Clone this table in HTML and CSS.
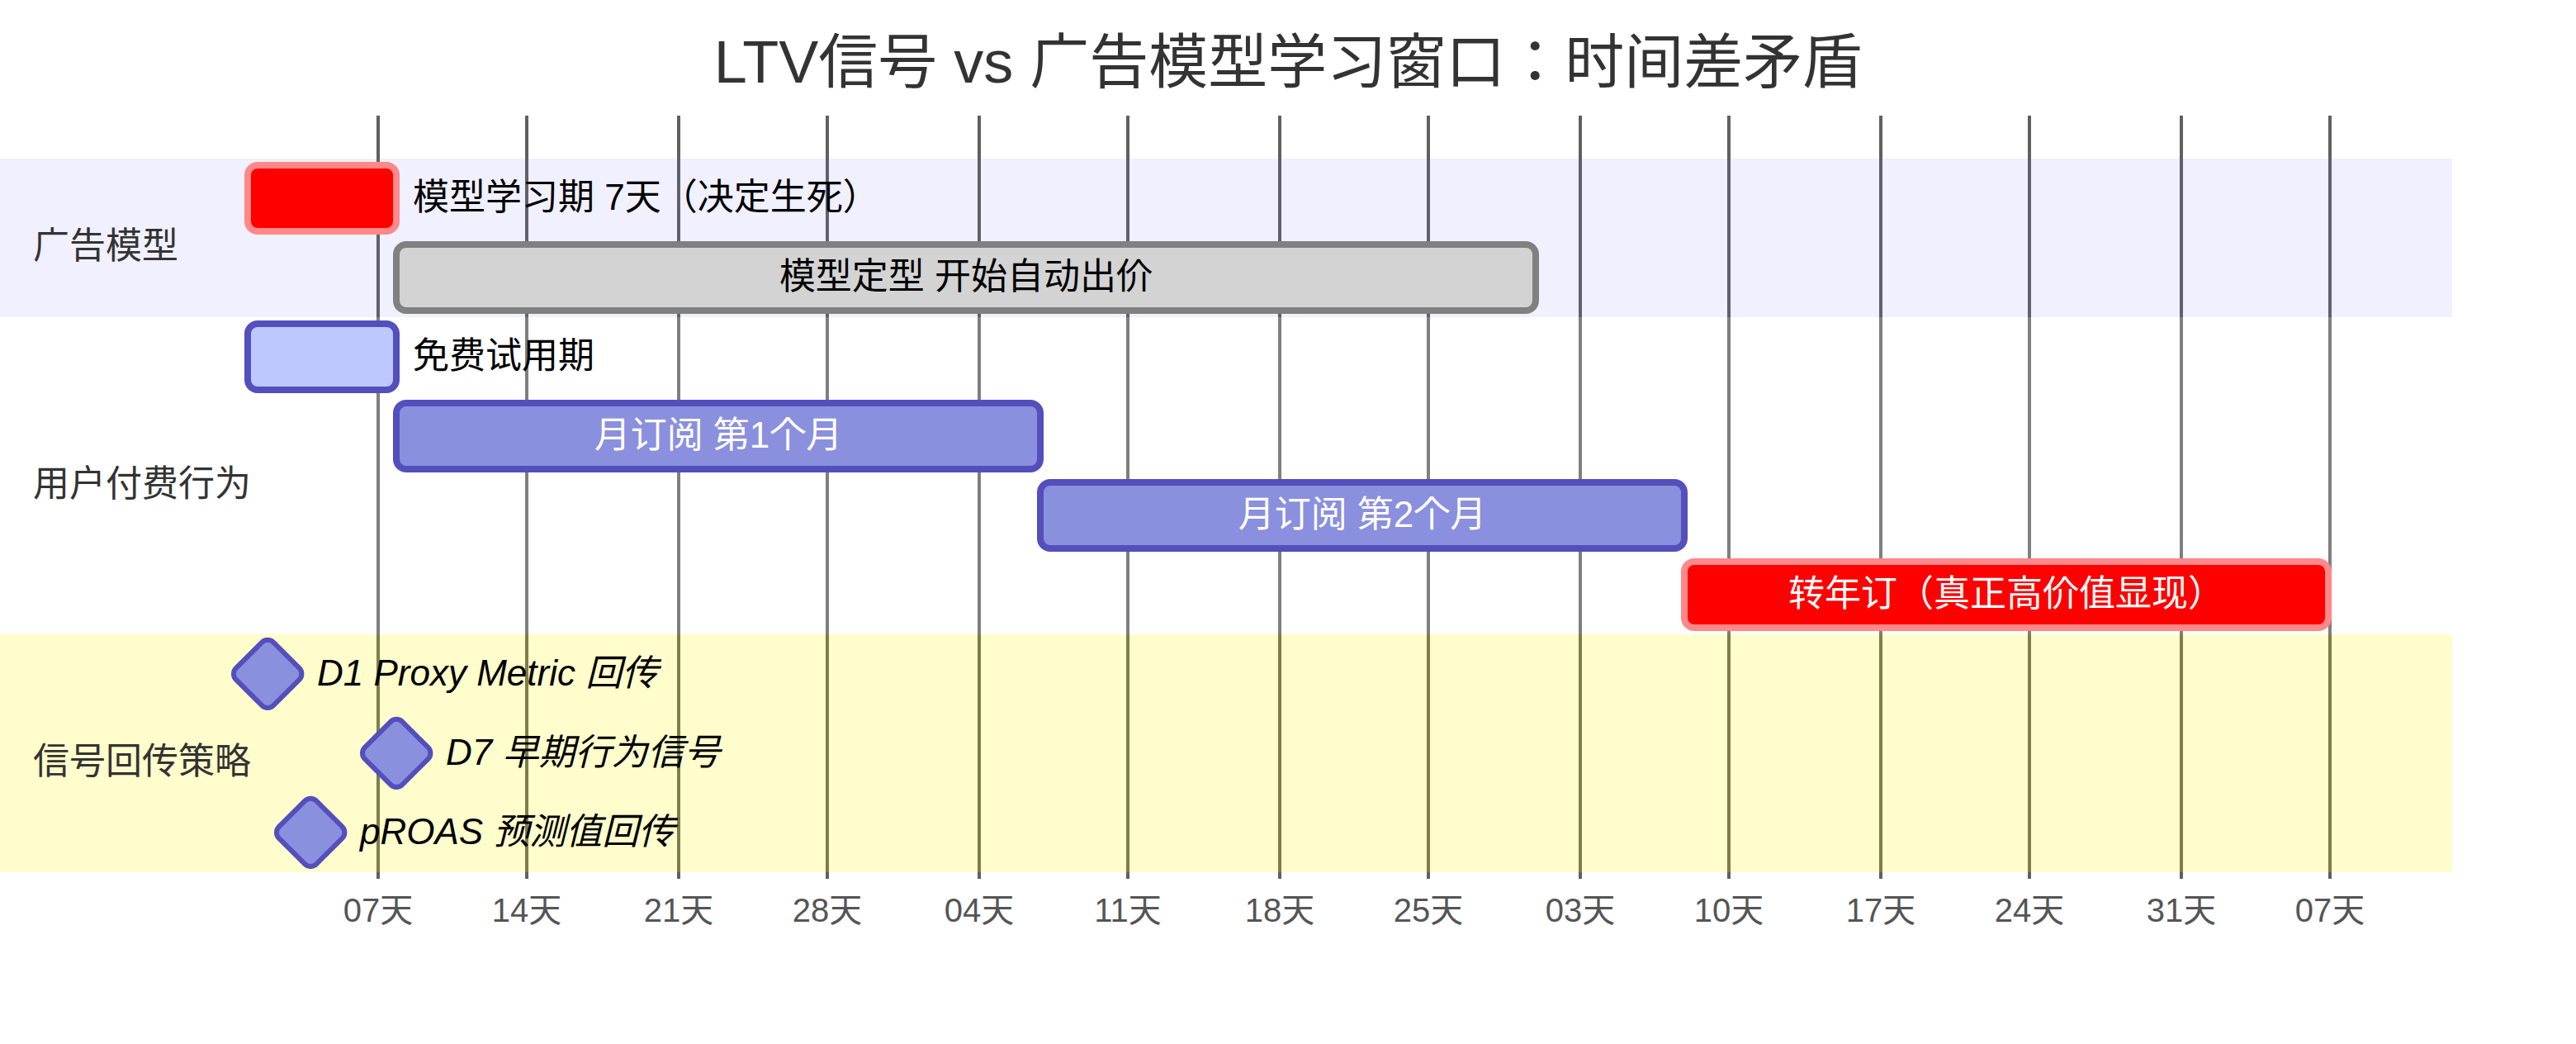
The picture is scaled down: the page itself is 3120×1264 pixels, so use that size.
FILE: index.html
```html
<!DOCTYPE html>
<html>
<head>
<meta charset="utf-8">
<title>LTV信号 vs 广告模型学习窗口：时间差矛盾</title>
<link rel="stylesheet" href="styles.css">
</head>
<body>
<div class="chart">
  <div class="grid">
    <div class="tick" style="left:458px"><span class="tick-label">07天</span></div>
    <div class="tick" style="left:638px"><span class="tick-label">14天</span></div>
    <div class="tick" style="left:822px"><span class="tick-label">21天</span></div>
    <div class="tick" style="left:1002px"><span class="tick-label">28天</span></div>
    <div class="tick" style="left:1186px"><span class="tick-label">04天</span></div>
    <div class="tick" style="left:1366px"><span class="tick-label">11天</span></div>
    <div class="tick" style="left:1550px"><span class="tick-label">18天</span></div>
    <div class="tick" style="left:1730px"><span class="tick-label">25天</span></div>
    <div class="tick" style="left:1914px"><span class="tick-label">03天</span></div>
    <div class="tick" style="left:2094px"><span class="tick-label">10天</span></div>
    <div class="tick" style="left:2278px"><span class="tick-label">17天</span></div>
    <div class="tick" style="left:2458px"><span class="tick-label">24天</span></div>
    <div class="tick" style="left:2642px"><span class="tick-label">31天</span></div>
    <div class="tick" style="left:2822px"><span class="tick-label">07天</span></div>
  </div>

  <h1 class="title">LTV信号 vs 广告模型学习窗口：时间差矛盾</h1>

  <div class="sections">
    <section class="section section-0">
      <div class="section-label">广告模型</div>
      <div class="rows">
        <div class="row">
          <div class="bar crit" style="margin-left:296px;width:188px"></div>
          <span class="outside-text">模型学习期 7天（决定生死）</span>
        </div>
        <div class="row">
          <div class="bar done" style="margin-left:476px;width:1388px"><span class="inside-text">模型定型 开始自动出价</span></div>
        </div>
      </div>
    </section>

    <section class="section section-1">
      <div class="section-label">用户付费行为</div>
      <div class="rows">
        <div class="row">
          <div class="bar active" style="margin-left:296px;width:188px"></div>
          <span class="outside-text">免费试用期</span>
        </div>
        <div class="row">
          <div class="bar task" style="margin-left:476px;width:788px"><span class="inside-text">月订阅 第1个月</span></div>
        </div>
        <div class="row">
          <div class="bar task" style="margin-left:1256px;width:788px"><span class="inside-text">月订阅 第2个月</span></div>
        </div>
        <div class="row">
          <div class="bar crit" style="margin-left:2036px;width:788px"><span class="inside-text">转年订（真正高价值显现）</span></div>
        </div>
      </div>
    </section>

    <section class="section section-2">
      <div class="section-label">信号回传策略</div>
      <div class="rows">
        <div class="row">
          <div class="diamond" style="margin-left:288.8px"></div>
          <span class="milestone-text">D1 Proxy Metric 回传</span>
        </div>
        <div class="row">
          <div class="diamond" style="margin-left:444.8px"></div>
          <span class="milestone-text">D7 早期行为信号</span>
        </div>
        <div class="row">
          <div class="diamond" style="margin-left:340.8px"></div>
          <span class="milestone-text">pROAS 预测值回传</span>
        </div>
      </div>
    </section>
  </div>
</div>
</body>
</html>
```

FILE: styles.css
```css
html, body {
  margin: 0;
  padding: 0;
  background: #ffffff;
}

body {
  width: 3120px;
  height: 1264px;
  overflow: hidden;
  font-family: "Liberation Sans", "Noto Sans CJK JP", "Noto Sans CJK SC", sans-serif;
}

.chart {
  position: relative;
  width: 3120px;
  height: 1264px;
}

/* ---------- grid / axis ---------- */
.grid {
  position: absolute;
  inset: 0;
  z-index: 0;
}

.tick {
  position: absolute;
  top: 140px;
  width: 4px;
  height: 924px;
  margin-left: -2px;
  background: #606060;
}

.tick-label {
  position: absolute;
  top: 942px;
  left: 50%;
  transform: translateX(-50%);
  white-space: nowrap;
  font-size: 40px;
  line-height: 40px;
  color: #555555;
}

/* ---------- title ---------- */
.title {
  margin: 0;
  padding-top: 35px;
  height: 80px;
  font-size: 72px;
  line-height: 80px;
  font-weight: normal;
  color: #333333;
  text-align: center;
  white-space: nowrap;
}

/* ---------- sections ---------- */
.sections {
  position: relative;
  z-index: 1;
  margin-top: 77px;
  display: flex;
  flex-direction: column;
  width: 2970px;
}

.section {
  display: grid;
}

.section-0 { background: rgba(102, 102, 255, 0.098); }
.section-1 { background: rgba(255, 255, 255, 0.2); }
.section-2 { background: rgba(255, 244, 0, 0.2); }

.section-label {
  grid-area: 1 / 1;
  align-self: center;
  justify-self: start;
  padding-left: 40px;
  padding-top: 20px;
  font-size: 44px;
  line-height: 44px;
  color: #333333;
  white-space: nowrap;
}

.rows {
  grid-area: 1 / 1;
  display: flex;
  flex-direction: column;
}

.row {
  display: flex;
  align-items: flex-start;
  height: 96px;
}

/* ---------- bars ---------- */
.bar {
  flex: none;
  box-sizing: border-box;
  height: 88px;
  margin-top: 4px;
  border: 8px solid;
  border-radius: 16px;
  text-align: center;
  font-size: 44px;
  white-space: nowrap;
}

.bar.crit   { background: #ff0000; border-color: #ff8888; color: #ffffff; }
.bar.done   { background: #d3d3d3; border-color: #808080; color: #000000; }
.bar.active { background: #bfc7ff; border-color: #534fbc; color: #000000; }
.bar.task   { background: #8a90dd; border-color: #534fbc; color: #ffffff; }

.inside-text {
  display: block;
  line-height: 70px;
}

.outside-text,
.milestone-text {
  flex: none;
  margin-top: 12px;
  font-size: 44px;
  line-height: 70px;
  color: #000000;
  white-space: nowrap;
}

.outside-text {
  margin-left: 16px;
}

/* ---------- milestones ---------- */
.diamond {
  flex: none;
  box-sizing: border-box;
  width: 70.4px;
  height: 70.4px;
  margin-top: 12.8px;
  border: 6.4px solid #534fbc;
  border-radius: 12.8px;
  background: #8a90dd;
  transform: rotate(45deg);
}

.milestone-text {
  margin-left: 24.8px;
  font-style: italic;
}
```
